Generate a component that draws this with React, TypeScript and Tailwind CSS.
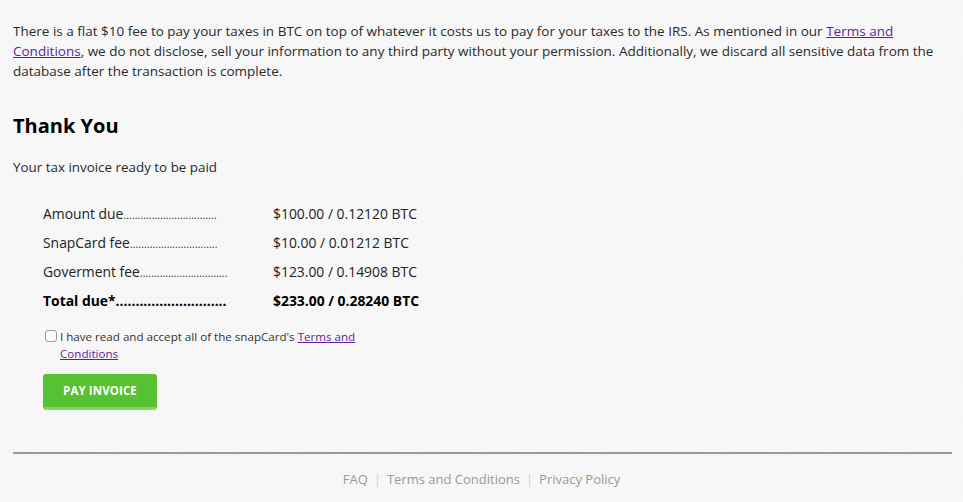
const rows = [
  { label: 'Amount due', dots: '.................................', value: '$100.00 / 0.12120 BTC' },
  { label: 'SnapCard fee', dots: '...............................', value: '$10.00 / 0.01212 BTC' },
  { label: 'Goverment fee', dots: '...............................', value: '$123.00 / 0.14908 BTC' },
];

export default function App() {
  return (
    <div
      className="min-h-[502px] w-full bg-[#f6f6f6] bg-[repeating-linear-gradient(135deg,#f5f5f5_0px,#f5f5f5_2px,#f8f8f8_2px,#f8f8f8_5px)] text-[#222] px-[13px] pt-[21px]"
      style={{ fontFamily: '"Open Sans", "Liberation Sans", sans-serif' }}
    >
      <p className="text-[13.5px] leading-[20px] text-[#2a2a2a]">
        There is a flat $10 fee to pay your taxes in BTC on top of whatever it costs us to pay for your taxes to the IRS. As mentioned in our{' '}
        <a href="#" className="text-[#5b1f9e] underline">Terms and Conditions</a>, we do not disclose, sell your information to any third party without your permission. Additionally, we discard all sensitive data from the database after the transaction is complete.
      </p>

      <h2 className="mt-[31px] text-[20px] leading-[28px] font-bold text-black">Thank You</h2>

      <p className="mt-[17px] text-[13.4px] leading-[20px] text-[#2a2a2a]">Your tax invoice ready to be paid</p>

      <div className="mt-[22px] pl-[30px] flex flex-col text-[13.9px] leading-[29px] text-[#222]">
        {rows.map((r) => (
          <div key={r.label} className="flex h-[29px]">
            <span className="w-[230px] whitespace-nowrap">{r.label}<span className="text-[10px] tracking-[0.2px]">{r.dots}</span></span>
            <span>{r.value}</span>
          </div>
        ))}
        <div className="flex h-[28px] font-bold text-black">
          <span className="w-[230px] whitespace-nowrap">Total due*<span>............................</span></span>
          <span>$233.00 / 0.28240 BTC</span>
        </div>
      </div>

      <div className="mt-[14px] pl-[32px] flex items-start gap-[3px] text-[11.6px] leading-[17px] text-[#333] w-[370px]">
        <span className="mt-[2px] w-[12px] h-[12px] shrink-0 rounded-[3px] border border-[#9a9a9a] bg-[#fafafa]" />
        <span>
          I have read and accept all of the snapCard's{' '}
          <a href="#" className="text-[#5b1f9e] underline">Terms and Conditions</a>
        </span>
      </div>

      <div className="mt-[12px] pl-[30px]">
        <button className="w-[114px] h-[36px] rounded-[3px] bg-[#56c132] border-b-[3px] border-[#7fd85a] text-white text-[11.5px] font-bold tracking-[0.1px]">
          PAY INVOICE
        </button>
      </div>

      <div className="mt-[42px] border-t-2 border-[#9a9a9a] w-[939px]" />

      <div className="flex justify-center items-center pt-[15px] text-[13px] leading-[20px] text-[#999]">
        <span>FAQ</span>
        <span className="mx-[6px] text-[#d0d0d0]">|</span>
        <span>Terms and Conditions</span>
        <span className="mx-[6px] text-[#d0d0d0]">|</span>
        <span>Privacy Policy</span>
      </div>
    </div>
  );
}
